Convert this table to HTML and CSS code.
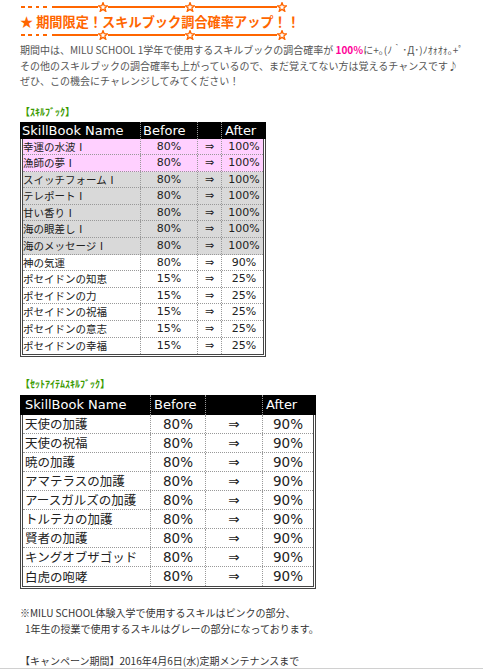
FILE: index.html
```html
<!DOCTYPE html>
<html lang="ja">
<head>
<meta charset="utf-8">
<title>期間限定！スキルブック調合確率アップ！！</title>
<link rel="stylesheet" href="styles.css">
</head>
<body>
<div class="page">
  <div class="rule">
    <span class="dashes"></span><span class="seg s1"></span>
    <svg class="star" viewBox="0 0 10 10" width="10" height="10"><polygon points="5,0.6 6.2,3.7 9.5,3.8 6.9,5.9 7.8,9.3 5,7.4 2.2,9.3 3.1,5.9 0.5,3.8 3.8,3.7"/></svg>
    <span class="seg s2"></span>
    <svg class="star" viewBox="0 0 10 10" width="10" height="10"><polygon points="5,0.6 6.2,3.7 9.5,3.8 6.9,5.9 7.8,9.3 5,7.4 2.2,9.3 3.1,5.9 0.5,3.8 3.8,3.7"/></svg>
    <span class="seg s3"></span>
    <svg class="star" viewBox="0 0 10 10" width="10" height="10"><polygon points="5,0.6 6.2,3.7 9.5,3.8 6.9,5.9 7.8,9.3 5,7.4 2.2,9.3 3.1,5.9 0.5,3.8 3.8,3.7"/></svg>
  </div>
  <h1 class="title">★ 期間限定！スキルブック調合確率アップ！！</h1>
  <div class="rule">
    <span class="dashes"></span><span class="seg s1"></span>
    <svg class="star" viewBox="0 0 10 10" width="10" height="10"><polygon points="5,0.6 6.2,3.7 9.5,3.8 6.9,5.9 7.8,9.3 5,7.4 2.2,9.3 3.1,5.9 0.5,3.8 3.8,3.7"/></svg>
    <span class="seg s2"></span>
    <svg class="star" viewBox="0 0 10 10" width="10" height="10"><polygon points="5,0.6 6.2,3.7 9.5,3.8 6.9,5.9 7.8,9.3 5,7.4 2.2,9.3 3.1,5.9 0.5,3.8 3.8,3.7"/></svg>
    <span class="seg s3"></span>
    <svg class="star" viewBox="0 0 10 10" width="10" height="10"><polygon points="5,0.6 6.2,3.7 9.5,3.8 6.9,5.9 7.8,9.3 5,7.4 2.2,9.3 3.1,5.9 0.5,3.8 3.8,3.7"/></svg>
  </div>

  <p class="intro">期間中は、MILU SCHOOL 1学年で使用するスキルブックの調合確率が <span class="pct">100％</span>に+｡(ﾉ｀･Д･)ﾉｵｫｵｫ｡+ﾟ<br>その他のスキルブックの調合確率も上がっているので、まだ覚えてない方は覚えるチャンスです♪<br>ぜひ、この機会にチャレンジしてみてください！</p>

  <h2 class="sub">【ｽｷﾙﾌﾞｯｸ】</h2>
  <div class="tbl t1">
    <div class="thead"><span>SkillBook Name</span><span>Before</span><span></span><span>After</span></div>
    <div class="tbody">
      <div class="row pink"><span class="name">幸運の水波Ⅰ</span><span class="num">80%</span><span class="arr">⇒</span><span class="num">100%</span></div>
      <div class="row pink"><span class="name">漁師の夢Ⅰ</span><span class="num">80%</span><span class="arr">⇒</span><span class="num">100%</span></div>
      <div class="row gray"><span class="name">スイッチフォームⅠ</span><span class="num">80%</span><span class="arr">⇒</span><span class="num">100%</span></div>
      <div class="row gray"><span class="name">テレポートⅠ</span><span class="num">80%</span><span class="arr">⇒</span><span class="num">100%</span></div>
      <div class="row gray"><span class="name">甘い香りⅠ</span><span class="num">80%</span><span class="arr">⇒</span><span class="num">100%</span></div>
      <div class="row gray"><span class="name">海の眼差しⅠ</span><span class="num">80%</span><span class="arr">⇒</span><span class="num">100%</span></div>
      <div class="row gray"><span class="name">海のメッセージⅠ</span><span class="num">80%</span><span class="arr">⇒</span><span class="num">100%</span></div>
      <div class="row"><span class="name">神の気運</span><span class="num">80%</span><span class="arr">⇒</span><span class="num">90%</span></div>
      <div class="row"><span class="name">ポセイドンの知恵</span><span class="num">15%</span><span class="arr">⇒</span><span class="num">25%</span></div>
      <div class="row"><span class="name">ポセイドンの力</span><span class="num">15%</span><span class="arr">⇒</span><span class="num">25%</span></div>
      <div class="row"><span class="name">ポセイドンの祝福</span><span class="num">15%</span><span class="arr">⇒</span><span class="num">25%</span></div>
      <div class="row"><span class="name">ポセイドンの意志</span><span class="num">15%</span><span class="arr">⇒</span><span class="num">25%</span></div>
      <div class="row last"><span class="name">ポセイドンの幸福</span><span class="num">15%</span><span class="arr">⇒</span><span class="num">25%</span></div>
    </div>
  </div>

  <h2 class="sub sub2">【ｾｯﾄｱｲﾃﾑｽｷﾙﾌﾞｯｸ】</h2>
  <div class="tbl t2">
    <div class="thead"><span>SkillBook Name</span><span>Before</span><span></span><span>After</span></div>
    <div class="tbody">
      <div class="row"><span class="name">天使の加護</span><span class="num">80%</span><span class="arr">⇒</span><span class="num">90%</span></div>
      <div class="row"><span class="name">天使の祝福</span><span class="num">80%</span><span class="arr">⇒</span><span class="num">90%</span></div>
      <div class="row"><span class="name">暁の加護</span><span class="num">80%</span><span class="arr">⇒</span><span class="num">90%</span></div>
      <div class="row"><span class="name">アマテラスの加護</span><span class="num">80%</span><span class="arr">⇒</span><span class="num">90%</span></div>
      <div class="row"><span class="name">アースガルズの加護</span><span class="num">80%</span><span class="arr">⇒</span><span class="num">90%</span></div>
      <div class="row"><span class="name">トルテカの加護</span><span class="num">80%</span><span class="arr">⇒</span><span class="num">90%</span></div>
      <div class="row"><span class="name">賢者の加護</span><span class="num">80%</span><span class="arr">⇒</span><span class="num">90%</span></div>
      <div class="row"><span class="name">キングオブザゴッド</span><span class="num">80%</span><span class="arr">⇒</span><span class="num">90%</span></div>
      <div class="row last"><span class="name">白虎の咆哮</span><span class="num">80%</span><span class="arr">⇒</span><span class="num">90%</span></div>
    </div>
  </div>

  <p class="note">※MILU SCHOOL体験入学で使用するスキルはピンクの部分、<br>&ensp;1年生の授業で使用するスキルはグレーの部分になっております。</p>
  <p class="period">【キャンペーン期間】2016年4月6日(水)定期メンテナンスまで</p>
</div>
</body>
</html>
```

FILE: styles.css
```css
html, body {
  margin: 0;
  padding: 0;
  background: #fff;
}
body {
  font-family: "Noto Sans CJK JP", "DejaVu Sans", sans-serif;
  color: #333;
}
.page {
  height: 669px;
  box-sizing: border-box;
  padding: 2px 0 0 20px;
  border-bottom: 1px solid #d0d0d0;
  overflow: hidden;
}

/* decorative rule */
.rule {
  display: flex;
  align-items: center;
  height: 10px;
}
.dashes {
  width: 30px;
  height: 2px;
  margin-left: 1px;
  margin-right: 1px;
  background: repeating-linear-gradient(90deg, #ff6600 0 3.5px, transparent 3.5px 7.5px);
}
.seg {
  height: 2px;
  background: #ff6600;
}
.s1 { width: 46px; }
.s2 { width: 77px; }
.s3 { width: 82px; }
.star {
  display: block;
  flex: none;
}
.star polygon {
  fill: #fff;
  stroke: #ff6600;
  stroke-width: 1.3;
  stroke-linejoin: miter;
}

.title {
  margin: 0;
  padding-top: 2px;
  font-size: 13.2px;
  line-height: 16px;
  font-weight: bold;
  color: #ff6600;
  white-space: nowrap;
}

.intro {
  margin: 2px 0 0;
  font-size: 10px;
  line-height: 15.5px;
  color: #555;
  white-space: nowrap;
}
.pct {
  color: #ff0099;
  font-weight: bold;
}

.sub {
  margin: 17px 0 0;
  font-size: 10px;
  line-height: 12px;
  font-weight: bold;
  color: #3a9a00;
}
.sub2 { margin-top: 21px; }

/* tables */
.tbl {
  width: max-content;
  font-family: "DejaVu Sans", "Noto Sans CJK JP", sans-serif;
  color: #222;
}
.t1 { margin-top: 4px; }
.t2 { margin-top: 5px; }

.thead {
  display: grid;
  background: #000;
  color: #fff;
  white-space: nowrap;
}
.thead span {
  border-right: 1px dotted #999;
}
.thead span:last-child { border-right: none; }

.tbody {
  border: 3px double #444;
  border-top: none;
}
.row {
  display: grid;
  border-bottom: 1px dotted #999;
  white-space: nowrap;
}
.row.last { border-bottom: none; }
.row span {
  display: block;
  border-right: 1px dotted #999;
  overflow: hidden;
}
.row span:last-child { border-right: none; }
.row .num, .row .arr { text-align: center; }
.row .name { font-family: "Noto Sans CJK JP", sans-serif; }

.pink { background: #ffd0ff; }
.gray { background: #d9d9d9; }

/* table 1 */
.t1 .thead {
  grid-template-columns: 121px 57px 24px 44px;
  font-size: 13px;
  line-height: 17px;
}
.t1 .thead span:nth-child(1) { padding-left: 2px; }
.t1 .thead span:nth-child(2) { padding-left: 2px; }
.t1 .thead span:nth-child(4) { padding-left: 3px; }
.t1 .row {
  grid-template-columns: 118px 57px 24px 41px;
  grid-template-rows: 15.6px;
  font-size: 11px;
}
.t1 .row span { line-height: 15.6px; height: 15.6px; }
.t1 .row.last { grid-template-rows: 16.6px; }
.t1 .row.last span { line-height: 16.6px; height: 16.6px; }
.t1 .row .name { font-size: 10.5px; }
.t1 .row .num:last-child { padding-left: 3px; }

/* table 2 */
.t2 .thead {
  grid-template-columns: 131px 55px 57px 53px;
  font-size: 13px;
  line-height: 20px;
}
.t2 .thead span:nth-child(1) { padding-left: 5px; }
.t2 .thead span:nth-child(2) { padding-left: 3px; }
.t2 .thead span:nth-child(4) { padding-left: 3px; }
.t2 .row {
  grid-template-columns: 128px 55px 57px 50px;
  grid-template-rows: 18px;
  font-size: 13.5px;
}
.t2 .row span { line-height: 18px; height: 18px; }
.t2 .row.last { grid-template-rows: 19px; }
.t2 .row.last span { line-height: 19px; height: 19px; }
.t2 .row .name { font-size: 12.5px; padding-left: 2px; }

.note {
  margin: 16px 0 0;
  font-size: 10px;
  line-height: 16px;
  color: #333;
  white-space: nowrap;
}
.period {
  margin: 16px 0 0;
  font-size: 10px;
  line-height: 16px;
  color: #333;
  white-space: nowrap;
}
```
